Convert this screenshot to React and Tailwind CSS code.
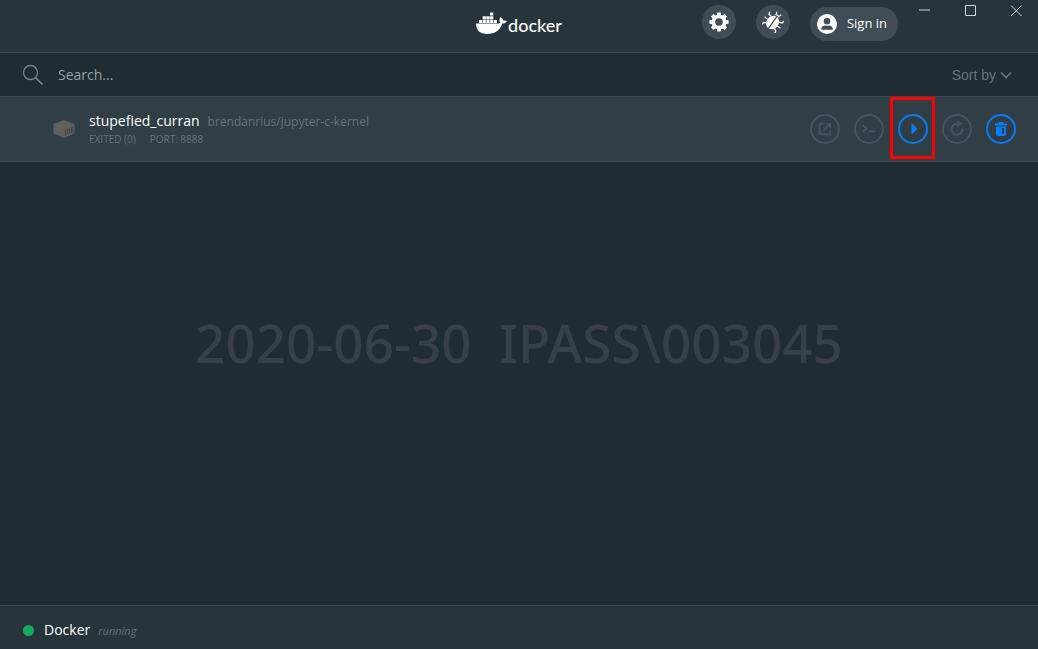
import React from "react";

const ink = { fill: "none", stroke: "currentColor" };

function DockerWhale() {
  return (
    <svg viewBox="0 0 32 24" className="h-6 w-8 shrink-0" fill="currentColor" aria-hidden="true">
      <path d="M0 12.500h22c1.100 0 1.900-.4 2.200-1.100-1-1.600-.9-3.900.3-5.400 1.700.9 2.500 2.200 2.700 3.600 1.300-.3 2.700-.1 3.600.6-.8 1.700-2.500 2.400-4.600 2.300C24.200 19.300 19 23 11.300 23 4 23 .2 19.500 0 12.500z" />
      <path d="M3 8.900h3.200v3.100H3zM6.700 8.900h3.200v3.100H6.700zM10.400 8.900h3.200v3.100h-3.200zM14.100 8.900h3.200v3.100h-3.200zM17.800 8.900H21v3.100h-3.200zM6.700 5.300h3.200v3.100H6.700zM10.400 5.300h3.200v3.100h-3.200zM14.100 5.300h3.200v3.100h-3.200zM14.100 1.500h3.200v3.100h-3.200z" />
    </svg>
  );
}

function GearIcon() {
  return (
    <svg viewBox="0 0 20 20" className="size-5" aria-hidden="true">
      <circle cx="10" cy="10" r="5.600" {...ink} strokeWidth="3.600" />
      <g fill="currentColor">
        {[0, 45, 90, 135, 180, 225, 270, 315].map((angle) => (
          <path key={angle} d="M8.300.4h3.400l.5 3.200H7.800z" transform={`rotate(${angle} 10 10)`} />
        ))}
      </g>
    </svg>
  );
}

function BugIcon() {
  return (
    <svg viewBox="0 0 22 22" className="size-[22px]" aria-hidden="true">
      <g transform="rotate(35 11 11)">
        <path d="M10.400 4.500v14.200C7 18.200 4.900 15.300 4.900 11.800c0-3.600 2.100-6.700 5.500-7.300zM11.600 4.500v14.200c3.400-.5 5.500-3.400 5.500-6.900 0-3.600-2.100-6.700-5.500-7.300z" fill="currentColor" />
        <path d="M8 4.300a3.200 3.200 0 0 1 6 0L11 3.800z" fill="currentColor" />
        <path d="M9.300 2.800 8.300.4M12.700 2.800 13.700.4M6 7.700 3 6.700 2.600 4.300M5.500 11.800H1.300M6 15.500l-2.500 1.300-.3 2.500M16 7.700l3-1 .4-2.400M16.500 11.800h4.200M16 15.500l2.500 1.300.3 2.500" {...ink} strokeWidth="1.300" />
      </g>
    </svg>
  );
}

function UserIcon() {
  return (
    <svg viewBox="0 0 20 20" className="size-5" aria-hidden="true">
      <circle cx="10" cy="10" r="10" fill="currentColor" />
      <g className="fill-[#414d56]">
        <circle cx="10" cy="7.300" r="3.300" />
        <path d="M4.300 15.800v-1.300c0-1.700 2.200-3 4-3 .9.500 2.500.5 3.400 0 1.800 0 4 1.300 4 3v1.300z" />
      </g>
    </svg>
  );
}

function CubeIcon() {
  return (
    <svg viewBox="0 0 22 18" className="h-[18px] w-[22px] shrink-0" aria-hidden="true">
      <path d="M11 0l10.500 4v9.500L11 18 .5 13.500V4z" fill="#615f5f" />
      <path d="M12.500 9.500v6M14.500 8.700v6M16.500 7.900v6M18.500 7.100v6M20 6.500v6" {...ink} stroke="#3b4347" strokeWidth="0.900" />
    </svg>
  );
}

function ActionButton({ label, active, children }) {
  return (
    <button
      type="button"
      aria-label={label}
      className={
        active
          ? "flex size-[30px] items-center justify-center rounded-full border-2 border-[#087cfa] text-[#087cfa]"
          : "flex size-[30px] items-center justify-center rounded-full border-2 border-[#465362] text-[#465362]"
      }
    >
      <svg viewBox="0 0 16 16" className="size-4 shrink-0" aria-hidden="true">
        {children}
      </svg>
    </button>
  );
}

function Header() {
  return (
    <header className="grid h-[53px] shrink-0 grid-cols-[1fr_auto_1fr] border-b border-[#3b484f] bg-[#28343b]">
      <div />
      <div className="flex h-[46px] items-center text-white">
        <DockerWhale />
        <span className="pt-1 font-[Lato,sans-serif] text-lg leading-6 font-medium">docker</span>
      </div>
      <div className="flex items-start justify-end gap-5 pt-[5px] pr-4">
        <button type="button" aria-label="Settings" className="flex size-[34px] items-center justify-center rounded-full bg-[#414d56] text-white">
          <GearIcon />
        </button>
        <button type="button" aria-label="Troubleshoot" className="flex size-[34px] items-center justify-center rounded-full bg-[#414d56] text-white">
          <BugIcon />
        </button>
        <button type="button" className="mt-0.5 flex h-[34px] items-center gap-2.5 rounded-full bg-[#414d56] pr-[11px] pl-[7px] text-[13px] whitespace-nowrap text-white">
          <UserIcon />
          Sign in
        </button>
        <div className="flex gap-[34px] text-[#d4d7d9]">
          <button type="button" aria-label="Minimize">
            <svg viewBox="0 0 12 12" className="size-3"><path d="M1 5h11" {...ink} strokeWidth="2" opacity=".5" /></svg>
          </button>
          <button type="button" aria-label="Maximize">
            <svg viewBox="0 0 12 12" className="size-3"><path d="M1.500.5h10v10h-10z" {...ink} /></svg>
          </button>
          <button type="button" aria-label="Close">
            <svg viewBox="0 0 12 12" className="size-3"><path d="M1 .5l10.500 10.500M11.500.5L1 11" {...ink} /></svg>
          </button>
        </div>
      </div>
    </header>
  );
}

function SearchBar() {
  return (
    <div className="flex h-[43px] shrink-0 items-center pr-[26px] pl-[22px]">
      <label htmlFor="search" className="text-[#7c858b]">
        <svg viewBox="0 0 22 22" className="size-[22px]" aria-hidden="true">
          <circle cx="8.500" cy="8.500" r="7" {...ink} strokeWidth="1.300" />
          <path d="M13.500 13.500l7 7" {...ink} strokeWidth="1.500" />
        </svg>
      </label>
      <input
        id="search"
        type="text"
        aria-label="Search"
        placeholder="Search..."
        className="ml-3 h-8 min-w-0 flex-1 bg-transparent pl-0.5 text-sm text-white outline-none placeholder:text-[#9aa0a4]"
      />
      <button type="button" className="flex items-center gap-1 font-['Liberation_Sans',Arial,sans-serif] text-sm text-[#68727b]">
        Sort by
        <svg viewBox="0 0 12 12" className="size-3" aria-hidden="true"><path d="M1 3.500L6 8.500l5-5" {...ink} strokeWidth="1.700" /></svg>
      </button>
    </div>
  );
}

function ContainerRow() {
  return (
    <li className="flex h-[66px] items-center border-y border-[#3b484f] bg-[#313e45] pr-[22px] pl-[53px]">
      <CubeIcon />
      <div className="ml-3.5 min-w-0 flex-1 pb-0.5">
        <div className="flex items-baseline gap-2 leading-5">
          <span className="text-sm leading-5 font-medium text-white">stupefied_curran</span>
          <span className="truncate text-xs leading-5 text-[#69727b]">brendanrius/jupyter-c-kernel</span>
        </div>
        <div className="flex gap-3.5 text-[10px] leading-[14px] text-[#69727b]">
          <span>EXITED (0)</span>
          <span>PORT: 8888</span>
        </div>
      </div>
      <div className="flex gap-3.5">
        <ActionButton label="Open in browser">
          <path d="M6.500 2.700H2.700v10.600h10.600V9.500" {...ink} strokeWidth="2" />
          <path d="M6 10l6-6" {...ink} strokeWidth="1.800" />
          <path d="M8.500 2H14v5.500z" fill="currentColor" />
        </ActionButton>
        <ActionButton label="Open terminal">
          <path d="M1.500 4l4 3.500-4 3.500" {...ink} strokeWidth="2" />
          <path d="M8.500 10.500h6" {...ink} strokeWidth="2" />
        </ActionButton>
        <div className="relative">
          <ActionButton label="Start" active>
            <path d="M6.500 2v12l6-6z" fill="currentColor" />
          </ActionButton>
          <div className="pointer-events-none absolute -top-[17px] -right-[7px] -bottom-[15px] -left-2 border-3 border-[#ff0000]" />
        </div>
        <ActionButton label="Restart">
          <path d="M8.500 2.700A5.500 5.500 0 1 0 13.500 8" {...ink} strokeWidth="2.200" />
          <path d="M8 -1v7l5.500-3.500z" fill="currentColor" />
        </ActionButton>
        <ActionButton label="Delete" active>
          <path d="M2 2.500h3.500V1h5v1.500H14v2H2z" fill="currentColor" />
          <path fillRule="evenodd" d="M3 5.500h10V13a2 2 0 0 1-2 2H5a2 2 0 0 1-2-2zM9 7v5.500h2V7z" fill="currentColor" />
        </ActionButton>
      </div>
    </li>
  );
}

export default function App() {
  return (
    <div className="flex min-h-screen flex-col bg-[#202c33] font-['Open_Sans','Noto_Sans',sans-serif]">
      <Header />
      <SearchBar />
      <main className="flex flex-1 flex-col">
        <ul>
          <ContainerRow />
        </ul>
        <div className="flex flex-1 items-center justify-center pb-[82px]">
          <p className="font-['Noto_Sans','Open_Sans',sans-serif] text-[53px] leading-[72px] font-medium whitespace-pre text-[#373f48]">{"2020-06-30  IPASS\\003045"}</p>
        </div>
      </main>
      <footer className="flex h-11 shrink-0 items-center border-t border-[#3b484f] bg-[#28343b] pt-1.5 pl-[23px]">
        <span className="size-[11px] rounded-full bg-[#13aa61]" />
        <span className="ml-2.5 pb-0.5 text-sm font-medium text-white">Docker</span>
        <span className="ml-2 pt-0.5 text-[11px] text-[#69727b] italic">running</span>
      </footer>
    </div>
  );
}
